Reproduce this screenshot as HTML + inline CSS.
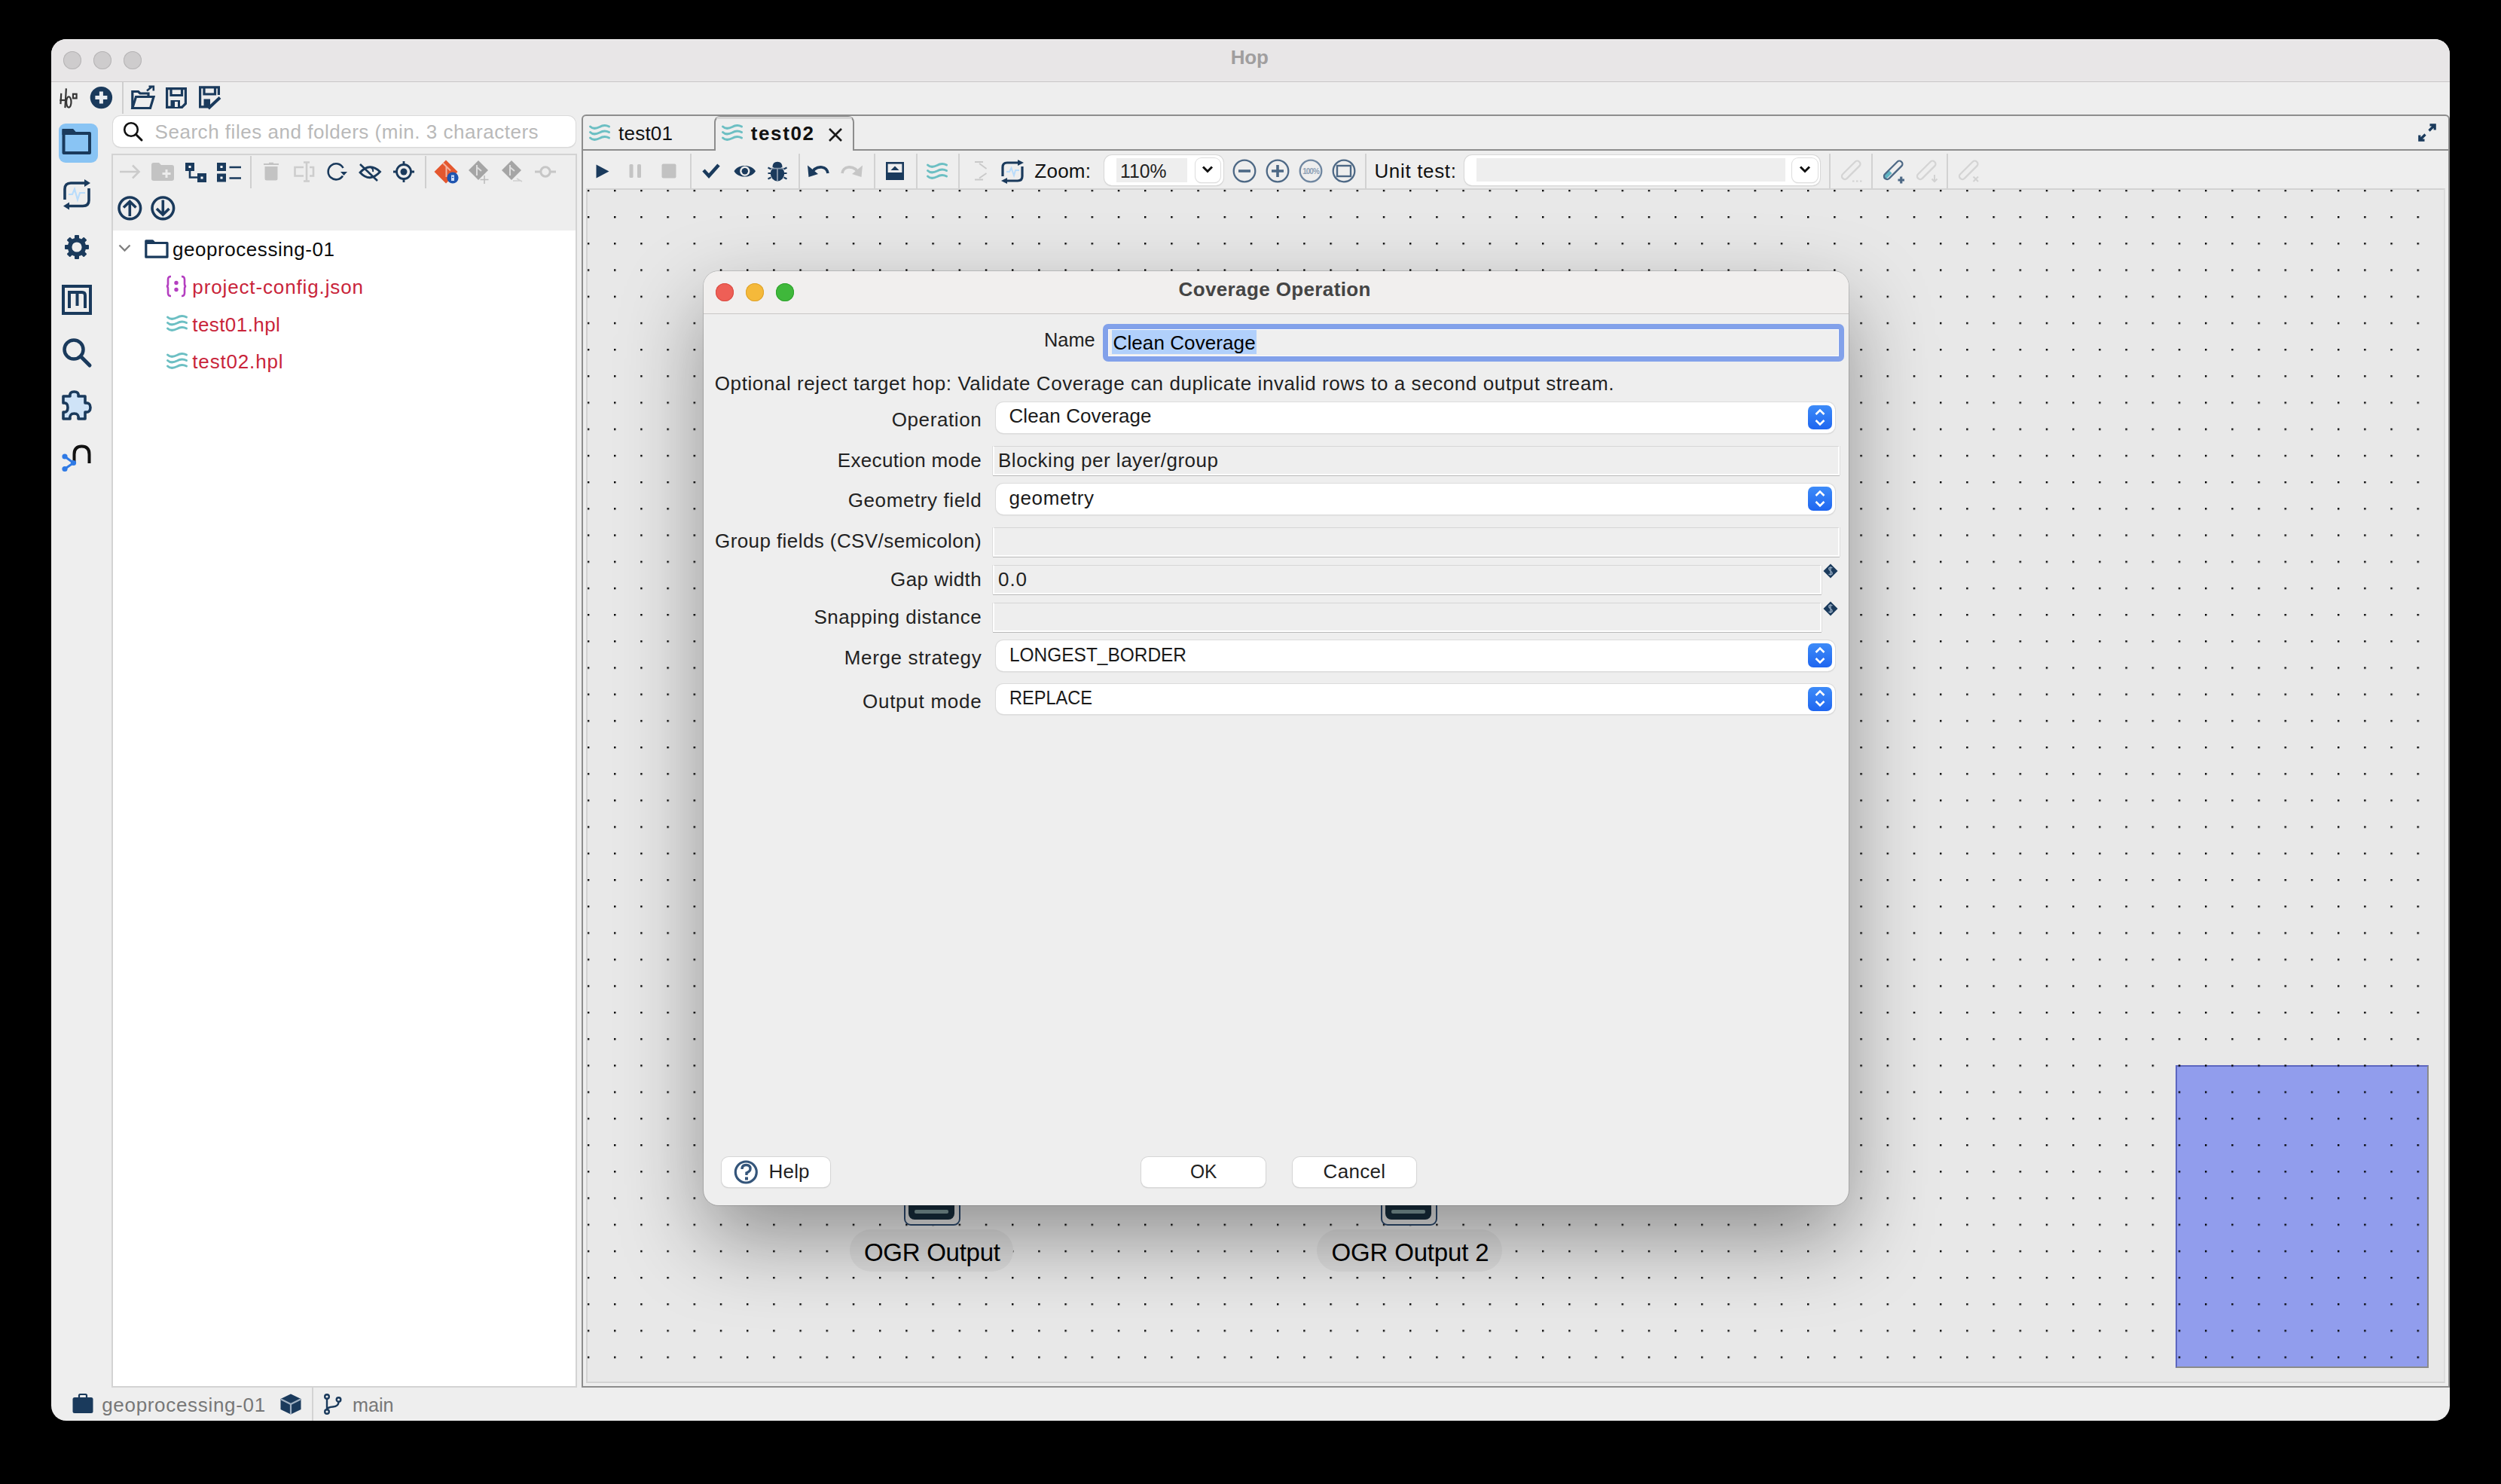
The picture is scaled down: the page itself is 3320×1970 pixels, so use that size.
<!DOCTYPE html>
<html><head><meta charset="utf-8">
<style>
*{box-sizing:border-box;margin:0;padding:0}
html,body{width:3320px;height:1970px;overflow:hidden;background:#000;font-family:"Liberation Sans",sans-serif}
.a{position:absolute}
.t{position:absolute;white-space:nowrap;line-height:1}
svg.a{overflow:visible}
</style></head>
<body>
<div class="a" style="left:68px;top:52px;width:3184px;height:1834px;border-radius:20px;background:#eeeeee;overflow:hidden"><div class="a" style="left:0;top:0;width:3184px;height:57px;background:#e8e6e7;border-bottom:1px solid #c9c7c8"></div><div class="a" style="left:0;top:0;width:3184px;height:1px;background:#f6f5f5"></div></div>
<div class="a" style="left:84px;top:68px;width:24px;height:24px;border-radius:50%;background:#cecccd;box-shadow:inset 0 0 0 1px #b6b4b5"></div>
<div class="a" style="left:124px;top:68px;width:24px;height:24px;border-radius:50%;background:#cecccd;box-shadow:inset 0 0 0 1px #b6b4b5"></div>
<div class="a" style="left:164px;top:68px;width:24px;height:24px;border-radius:50%;background:#cecccd;box-shadow:inset 0 0 0 1px #b6b4b5"></div>
<div class="t" style="left:1633.8px;top:63.1px;font-size:26px;color:#a09e9f;font-weight:700;letter-spacing:-0.273px;">Hop</div>
<svg class="a" style="left:78px;top:117px;" width="25" height="27" viewBox="0 0 25 27"><g fill="none" stroke="#222" stroke-width="2.2" stroke-linecap="square" opacity="0.9"><path d="M3.2 8 L2.5 20"/><path d="M2.5 16 H8.5"/><path d="M9.8 1.5 L8.5 25"/><ellipse cx="13.3" cy="18.5" rx="3.2" ry="7.2"/><rect x="19" y="7.8" width="4.6" height="5.6"/></g></svg>
<svg class="a" style="left:119px;top:114px;" width="31" height="31" viewBox="0 0 31 31"><circle cx="15.4" cy="15.6" r="14.7" fill="#1a3a5c"/><path d="M15.4 7.6 V23.6 M7.4 15.6 H23.4" stroke="#e9edf2" stroke-width="5"/></svg>
<div class="a" style="left:162px;top:109px;width:2px;height:42px;background:#cfcfcf"></div>
<svg class="a" style="left:174px;top:114px;" width="32" height="32" viewBox="0 0 32 32"><g fill="none" stroke="#1a3a5c" stroke-width="3.2" stroke-linejoin="miter"><path d="M1.8 29.5 V7.5 H9.5 L12 10 H23 V13"/><path d="M1.8 29.5 L6.5 14.5 H30 L25.5 29.5 Z"/></g><path d="M21 6.5 L28 0.8 M23.5 0.8 H29.8 V6.5" fill="none" stroke="#1a3a5c" stroke-width="2.6"/></svg>
<svg class="a" style="left:220px;top:116px;" width="29" height="28" viewBox="0 0 29 28"><g fill="none" stroke="#1a3a5c" stroke-width="3.2"><path d="M1.6 1.6 H26.4 V21.5 L21.5 26.4 H1.6 Z"/><path d="M7 1.6 V10.5 H21.5 V1.6"/></g><path d="M6.5 17 H19 V26.4 H6.5 Z" fill="#1a3a5c"/><rect x="12" y="19" width="4" height="7" fill="#eeeeee"/></svg>
<svg class="a" style="left:264px;top:114px;" width="30" height="32" viewBox="0 0 30 32"><g fill="none" stroke="#1a3a5c" stroke-width="3.2"><path d="M12 27.8 H1.6 V1.8 H26.4 V12"/><path d="M7 1.8 V11 H21.5 V1.8"/></g><path d="M6.5 17.5 H15 V27.8 H6.5 Z" fill="#1a3a5c"/><path d="M12.5 30 L28 15.5" stroke="#1a3a5c" stroke-width="4"/></svg>
<div class="a" style="left:78px;top:164px;width:52px;height:52px;background:#89c4f4;border-radius:9px"></div>
<svg class="a" style="left:82px;top:170px;" width="40" height="36" viewBox="0 0 40 36"><path d="M2.5 3 H14 L17.5 7 H37 V33 H2.5 Z" fill="#89c4f4" stroke="#1a3a5c" stroke-width="4" stroke-linejoin="round"/><path d="M2.5 3 H14 L17.5 7 H2.5Z" fill="#1a3a5c" stroke="#1a3a5c" stroke-width="4"/></svg>
<svg class="a" style="left:84px;top:238px;" width="36" height="40" viewBox="0 0 36 40"><g fill="none" stroke="#1a3a5c" stroke-width="3.6"><path d="M2 27 V13 Q2 5 10 5 H30"/><path d="M34 12 V28 Q34 35.5 26 35.5 H6"/></g><path d="M28 0 L36 5 L28 10Z M8 30.5 L0 35.5 L8 40.5Z" fill="#1a3a5c"/><path d="M7 20 H12 L15 13 L19 27 L22 18 H29" fill="none" stroke="#b9dcfb" stroke-width="2.2"/></svg>
<svg class="a" style="left:86px;top:312px;" width="32" height="32" viewBox="0 0 32 32"><rect x="13" y="0" width="6" height="8" rx="1" fill="#1a3a5c" transform="rotate(0 16 16)"/><rect x="13" y="0" width="6" height="8" rx="1" fill="#1a3a5c" transform="rotate(45 16 16)"/><rect x="13" y="0" width="6" height="8" rx="1" fill="#1a3a5c" transform="rotate(90 16 16)"/><rect x="13" y="0" width="6" height="8" rx="1" fill="#1a3a5c" transform="rotate(135 16 16)"/><rect x="13" y="0" width="6" height="8" rx="1" fill="#1a3a5c" transform="rotate(180 16 16)"/><rect x="13" y="0" width="6" height="8" rx="1" fill="#1a3a5c" transform="rotate(225 16 16)"/><rect x="13" y="0" width="6" height="8" rx="1" fill="#1a3a5c" transform="rotate(270 16 16)"/><rect x="13" y="0" width="6" height="8" rx="1" fill="#1a3a5c" transform="rotate(315 16 16)"/><circle cx="16" cy="16" r="9.4" fill="none" stroke="#1a3a5c" stroke-width="5.6"/></svg>
<svg class="a" style="left:82px;top:378px;" width="40" height="40" viewBox="0 0 40 40"><rect x="2" y="2" width="36" height="36" fill="none" stroke="#1a3a5c" stroke-width="4"/><path d="M10 31 V10 H27 Q31 10 31 14 V31 M20.5 10 V28" fill="none" stroke="#1a3a5c" stroke-width="4"/></svg>
<svg class="a" style="left:82px;top:448px;" width="40" height="40" viewBox="0 0 40 40"><circle cx="16" cy="16" r="12.5" fill="none" stroke="#1a3a5c" stroke-width="4.5"/><path d="M25 25 L37 37" stroke="#1a3a5c" stroke-width="5" stroke-linecap="round"/></svg>
<svg class="a" style="left:82px;top:518px;" width="40" height="40" viewBox="0 0 40 40"><path d="M2 8 H11 Q10 2 16.5 2 Q23 2 22 8 H31 V17 Q38 16 38 23 Q38 30 31 29 V38 H22 Q23 31 16.5 31 Q10 31 11 38 H2 V29 Q8 30 8 23 Q8 16 2 17 Z" fill="#cfe3f7" stroke="#1a3a5c" stroke-width="3.6" stroke-linejoin="round"/></svg>
<svg class="a" style="left:82px;top:589px;" width="40" height="38" viewBox="0 0 40 38"><path d="M16.5 26 V14 Q16.5 3.5 26.5 3.5 Q36.5 3.5 36.5 14 V26" fill="none" stroke="#111" stroke-width="4"/><path d="M4 17 L15.5 25.5 L4 33.5" fill="none" stroke="#2f7ae5" stroke-width="3"/><circle cx="4" cy="17" r="3.6" fill="#2f7ae5"/><circle cx="15.5" cy="25.5" r="3.6" fill="#2f7ae5"/><circle cx="4" cy="33.5" r="3.6" fill="#2f7ae5"/></svg>
<div class="a" style="left:150px;top:154px;width:614px;height:41px;background:#fff;border-radius:10px;box-shadow:0 0 0 1px #dadada,0 1px 1.5px #bdbdbd"></div>
<svg class="a" style="left:163px;top:161px;" width="28" height="28" viewBox="0 0 28 28"><circle cx="11" cy="11" r="8.8" fill="none" stroke="#111" stroke-width="2.6"/><path d="M17.5 17.5 L25 25" stroke="#111" stroke-width="3" stroke-linecap="round"/></svg>
<div class="t" style="left:205.6px;top:162.4px;font-size:26px;color:#b9b9b9;font-weight:400;letter-spacing:0.524px;">Search files and folders (min. 3 characters</div>
<div class="a" style="left:148px;top:204px;width:618px;height:1638px;background:#eeeeee;border:2px solid #d3d3d3"></div>
<div class="a" style="left:150px;top:306px;width:614px;height:1534px;background:#ffffff"></div>
<svg class="a" style="left:158px;top:218px;" width="28" height="20" viewBox="0 0 28 20"><path d="M1 10 H26 M18 1.5 L26.5 10 L18 18.5" fill="none" stroke="#cbcbcb" stroke-width="2.6"/></svg>
<svg class="a" style="left:201px;top:216px;" width="30" height="24" viewBox="0 0 30 24"><path d="M0 3 Q0 0 3 0 H10 L13 3 H27 Q30 3 30 6 V21 Q30 24 27 24 H3 Q0 24 0 21Z" fill="#c3c3c3"/><path d="M20 9 V20 M14.5 14.5 H25.5" stroke="#ececec" stroke-width="3"/></svg>
<svg class="a" style="left:246px;top:216px;" width="28" height="26" viewBox="0 0 28 26"><rect x="0" y="0" width="12" height="11" fill="#1a3a5c"/><rect x="16" y="14" width="12" height="12" fill="#1a3a5c"/><rect x="4.5" y="4" width="3" height="3" fill="#fff"/><rect x="20.5" y="18.5" width="3" height="3" fill="#fff"/><path d="M6 11 V19.5 H16" fill="none" stroke="#1a3a5c" stroke-width="2.6"/></svg>
<svg class="a" style="left:288px;top:216px;" width="32" height="26" viewBox="0 0 32 26"><rect x="0" y="0" width="12" height="11" fill="#1a3a5c"/><rect x="0" y="14.5" width="12" height="11" fill="#1a3a5c"/><rect x="4.5" y="4" width="3" height="3" fill="#fff"/><rect x="4.5" y="18.5" width="3" height="3" fill="#fff"/><path d="M16.5 6 H32 M16.5 20.5 H32" stroke="#1a3a5c" stroke-width="2.6"/></svg>
<div class="a" style="left:332px;top:207px;width:2px;height:43px;background:#cfcfcf"></div>
<svg class="a" style="left:350px;top:216px;" width="20" height="24" viewBox="0 0 20 24"><path d="M0 2 H20 M7 0.8 H13" stroke="#c3c3c3" stroke-width="2"/><path d="M1.5 5 H18.5 V21 Q18.5 23.5 16 23.5 H4 Q1.5 23.5 1.5 21Z" fill="#c3c3c3"/></svg>
<svg class="a" style="left:390px;top:214px;" width="28" height="28" viewBox="0 0 28 28"><path d="M13 8 H1.5 V19.5 H13 M21 8 H26 V19.5 H21 M17 2 V26 M13 1.5 H21 M13 26.5 H21" fill="none" stroke="#cdcdcd" stroke-width="2.6"/></svg>
<svg class="a" style="left:433px;top:216px;" width="28" height="24" viewBox="0 0 28 24"><path d="M22 17.5 A10.5 10.5 0 1 1 22.5 7" fill="none" stroke="#1a3a5c" stroke-width="2.6"/><path d="M19 12 H28 L23.5 17Z" fill="#1a3a5c"/></svg>
<svg class="a" style="left:476px;top:217px;" width="31" height="24" viewBox="0 0 31 24"><path d="M2 12 Q15 -2 28.5 11 Q15 26 2 12Z" fill="none" stroke="#1a3a5c" stroke-width="2.8"/><path d="M2 1 L25 23" stroke="#1a3a5c" stroke-width="2.6"/><path d="M16 5 Q20 7 19 11" fill="none" stroke="#1a3a5c" stroke-width="2"/></svg>
<svg class="a" style="left:522px;top:214px;" width="28" height="28" viewBox="0 0 28 28"><circle cx="14" cy="14" r="9.5" fill="none" stroke="#1a3a5c" stroke-width="2.8"/><circle cx="14" cy="14" r="4.5" fill="#1a3a5c"/><path d="M14 0 V5 M14 23 V28 M0 14 H5 M23 14 H28" stroke="#1a3a5c" stroke-width="2.8"/></svg>
<div class="a" style="left:564px;top:207px;width:2px;height:43px;background:#cfcfcf"></div>
<svg class="a" style="left:576px;top:212px;" width="33" height="33" viewBox="0 0 33 33"><path d="M16 0.5 L31.5 16 L16 31.5 L0.5 16Z" fill="#e4572e"/><path d="M12 4.5 L16.5 9 V23 M16.5 9 L22 14.5" stroke="#f4b3a0" stroke-width="2" fill="none"/><circle cx="25" cy="24" r="7.6" fill="#1f55b0"/><rect x="23" y="20.5" width="4" height="7.5" fill="#cfe0fb"/><rect x="23.8" y="22.8" width="2.4" height="1.2" fill="#1f55b0"/></svg>
<svg class="a" style="left:620px;top:212px;" width="32" height="33" viewBox="0 0 32 33"><path d="M15 1 L28 14 L15 27 L2 14Z" fill="#a5a5a5"/><path d="M13 7 V21 M13 10 L19 15" stroke="#ddd" stroke-width="2" fill="none"/><path d="M23 21 V32 M17.5 26.5 H28.5" stroke="#bdbdbd" stroke-width="1.6"/></svg>
<svg class="a" style="left:664px;top:212px;" width="31" height="33" viewBox="0 0 31 33"><path d="M15 1 L28 14 L15 27 L2 14Z" fill="#a5a5a5"/><path d="M13 7 V21 M13 10 L19 15" stroke="#ddd" stroke-width="2" fill="none"/><path d="M17 28 H26 M22 25 L29 29" stroke="#cfcfcf" stroke-width="1.6"/></svg>
<svg class="a" style="left:710px;top:219px;" width="28" height="18" viewBox="0 0 28 18"><circle cx="14" cy="9" r="6.2" fill="none" stroke="#c6c6c6" stroke-width="3"/><path d="M0 9 H7.5 M20.5 9 H28" stroke="#c6c6c6" stroke-width="3"/></svg>
<svg class="a" style="left:156px;top:260px;" width="33" height="33" viewBox="0 0 33 33"><circle cx="16.3" cy="16.3" r="14.3" fill="none" stroke="#1a3a5c" stroke-width="3.6"/><path d="M16.3 27 V8 M8 15.5 L16.3 7.5 L24.5 15.5" fill="none" stroke="#1a3a5c" stroke-width="3.6"/></svg>
<svg class="a" style="left:200px;top:260px;" width="33" height="33" viewBox="0 0 33 33"><circle cx="16.3" cy="16.3" r="14.3" fill="none" stroke="#1a3a5c" stroke-width="3.6"/><path d="M16.3 5.5 V24.5 M8 17 L16.3 25 L24.5 17" fill="none" stroke="#1a3a5c" stroke-width="3.6"/></svg>
<svg class="a" style="left:157px;top:324px;" width="17" height="11" viewBox="0 0 17 11"><path d="M1.5 1.5 L8.5 8.5 L15.5 1.5" fill="none" stroke="#808080" stroke-width="2.4"/></svg>
<svg class="a" style="left:192px;top:318px;" width="32" height="25" viewBox="0 0 32 25"><path d="M1.8 1.8 H10.5 L13 4.5 H30 V23.2 H1.8Z" fill="none" stroke="#1a3a5c" stroke-width="3.2" stroke-linejoin="round"/><path d="M1.8 4.5 H13" stroke="#1a3a5c" stroke-width="3"/></svg>
<div class="t" style="left:229.0px;top:318.0px;font-size:26px;color:#0b0b0b;font-weight:400;letter-spacing:0.553px;">geoprocessing-01</div>
<svg class="a" style="left:220px;top:365px;" width="28" height="30" viewBox="0 0 28 30"><g fill="none" stroke="#b43fc0" stroke-width="2.6"><path d="M7 2 Q3 2 3 6 V12 Q3 15 0.8 15 Q3 15 3 18 V24 Q3 28 7 28"/><path d="M21 2 Q25 2 25 6 V12 Q25 15 27.2 15 Q25 15 25 18 V24 Q25 28 21 28"/></g><circle cx="14" cy="10.5" r="2.7" fill="#b43fc0"/><circle cx="14" cy="19.5" r="2.7" fill="#b43fc0"/></svg>
<div class="t" style="left:255.3px;top:367.6px;font-size:26px;color:#c9243a;font-weight:400;letter-spacing:0.872px;">project-config.json</div>
<svg class="a" style="left:220.5px;top:416.5px;" width="28" height="24" viewBox="0 0 28 24"><g fill="none" stroke="#6cbfc3" stroke-width="3" stroke-linecap="round"><path d="M1.5 4.0 C5 7.5, 9 7.0, 14 4.5 C18 2.0, 22 1.5, 26.5 4.0"/><path d="M1.5 11.5 C5 15.0, 9 14.5, 14 12.0 C18 9.5, 22 9.0, 26.5 11.5"/><path d="M1.5 19.0 C5 22.5, 9 22.0, 14 19.5 C18 17.0, 22 16.5, 26.5 19.0"/></g></svg>
<div class="t" style="left:255.3px;top:417.5px;font-size:26px;color:#c9243a;font-weight:400;letter-spacing:0.417px;">test01.hpl</div>
<svg class="a" style="left:220.5px;top:466.5px;" width="28" height="24" viewBox="0 0 28 24"><g fill="none" stroke="#6cbfc3" stroke-width="3" stroke-linecap="round"><path d="M1.5 4.0 C5 7.5, 9 7.0, 14 4.5 C18 2.0, 22 1.5, 26.5 4.0"/><path d="M1.5 11.5 C5 15.0, 9 14.5, 14 12.0 C18 9.5, 22 9.0, 26.5 11.5"/><path d="M1.5 19.0 C5 22.5, 9 22.0, 14 19.5 C18 17.0, 22 16.5, 26.5 19.0"/></g></svg>
<div class="t" style="left:255.3px;top:467.4px;font-size:26px;color:#c9243a;font-weight:400;letter-spacing:0.828px;">test02.hpl</div>
<div class="a" style="left:772px;top:152px;width:2480px;height:1690px;background:#eeeeee;border:2px solid #8d8d8d;border-radius:6px 6px 0 0"></div>
<div class="a" style="left:774px;top:198px;width:175px;height:2px;background:#8d8d8d"></div>
<div class="a" style="left:1132px;top:198px;width:2118px;height:2px;background:#8d8d8d"></div>
<div class="a" style="left:948px;top:154px;width:186px;height:46px;border:2px solid #8d8d8d;border-bottom:none;border-radius:8px 8px 0 0;background:#eeeeee"></div>
<div class="a" style="left:951px;top:155px;width:180px;height:3px;background:#d5d5d5;border-radius:6px 6px 0 0"></div>
<svg class="a" style="left:782px;top:163.5px;" width="28" height="24" viewBox="0 0 28 24"><g fill="none" stroke="#6cbfc3" stroke-width="3" stroke-linecap="round"><path d="M1.5 4.0 C5 7.5, 9 7.0, 14 4.5 C18 2.0, 22 1.5, 26.5 4.0"/><path d="M1.5 11.5 C5 15.0, 9 14.5, 14 12.0 C18 9.5, 22 9.0, 26.5 11.5"/><path d="M1.5 19.0 C5 22.5, 9 22.0, 14 19.5 C18 17.0, 22 16.5, 26.5 19.0"/></g></svg>
<div class="t" style="left:821.0px;top:164.0px;font-size:26px;color:#111;font-weight:400;letter-spacing:0.234px;">test01</div>
<svg class="a" style="left:958.3px;top:163.5px;" width="28" height="24" viewBox="0 0 28 24"><g fill="none" stroke="#6cbfc3" stroke-width="3" stroke-linecap="round"><path d="M1.5 4.0 C5 7.5, 9 7.0, 14 4.5 C18 2.0, 22 1.5, 26.5 4.0"/><path d="M1.5 11.5 C5 15.0, 9 14.5, 14 12.0 C18 9.5, 22 9.0, 26.5 11.5"/><path d="M1.5 19.0 C5 22.5, 9 22.0, 14 19.5 C18 17.0, 22 16.5, 26.5 19.0"/></g></svg>
<div class="t" style="left:996.7px;top:164.0px;font-size:26px;color:#111;font-weight:700;letter-spacing:1.629px;">test02</div>
<svg class="a" style="left:1099px;top:169px;" width="20" height="20" viewBox="0 0 20 20"><path d="M2 2 L18 18 M18 2 L2 18" stroke="#1a1a1a" stroke-width="2.6"/></svg>
<svg class="a" style="left:3210px;top:164px;" width="24" height="24" viewBox="0 0 24 24"><path d="M14.5 9.5 L22 2 M15.5 1.8 H22.2 V8.5 M9.5 14.5 L2 22 M1.8 15.5 V22.2 H8.5" fill="none" stroke="#1a3a5c" stroke-width="3.2"/></svg>
<svg class="a" style="left:791px;top:218px;" width="18" height="19" viewBox="0 0 18 19"><path d="M0.5 0.5 L17.5 9.5 L0.5 18.5Z" fill="#1a3a5c"/></svg>
<svg class="a" style="left:835px;top:217px;" width="17" height="20" viewBox="0 0 17 20"><rect x="0.5" y="1" width="5" height="18" rx="1.5" fill="#c4c4c4"/><rect x="11" y="1" width="5" height="18" rx="1.5" fill="#c4c4c4"/></svg>
<svg class="a" style="left:878px;top:217px;" width="20" height="20" viewBox="0 0 20 20"><rect x="0.5" y="0.5" width="19" height="19" rx="2" fill="#c2c2c2"/></svg>
<div class="a" style="left:916px;top:204px;width:2px;height:46px;background:#d2d2d2"></div>
<svg class="a" style="left:932px;top:217px;" width="24" height="20" viewBox="0 0 24 20"><path d="M2 9 L9 16.5 L22 2" fill="none" stroke="#1a3a5c" stroke-width="4.6"/></svg>
<svg class="a" style="left:973.5px;top:216.5px;" width="30" height="21" viewBox="0 0 30 21"><path d="M0.5 10.2 C6 0.5, 23 0.5, 29 10.2 C23 20, 6 20, 0.5 10.2Z" fill="#1a3a5c"/><circle cx="14.8" cy="10.2" r="6.6" fill="#eeeeee"/><circle cx="14.8" cy="10.2" r="4.2" fill="#1a3a5c"/></svg>
<svg class="a" style="left:1019px;top:214px;" width="26" height="27" viewBox="0 0 26 27"><path d="M6.5 8 Q6.5 0.8 13 0.8 Q19.5 0.8 19.5 8Z" fill="#1a3a5c"/><ellipse cx="13" cy="16.5" rx="9.2" ry="10" fill="#1a3a5c"/><path d="M4.5 9.6 H21.5 M13 9.6 V26" stroke="#8797aa" stroke-width="1.8"/><path d="M0.5 8.5 L4.5 10.5 M0.5 16 H4.5 M0.5 23.5 L4.5 21.5 M25.5 8.5 L21.5 10.5 M25.5 16 H21.5 M25.5 23.5 L21.5 21.5" stroke="#1a3a5c" stroke-width="2"/></svg>
<div class="a" style="left:1060px;top:204px;width:2px;height:46px;background:#d2d2d2"></div>
<svg class="a" style="left:1072px;top:218px;" width="28" height="20" viewBox="0 0 28 20"><path d="M4 14 Q9 3 19 4 Q26 5 27 12" fill="none" stroke="#1a3a5c" stroke-width="3.6"/><path d="M0 1.5 L1.5 17 L14 13Z" fill="#1a3a5c"/></svg>
<svg class="a" style="left:1117px;top:218px;" width="28" height="20" viewBox="0 0 28 20"><path d="M24 14 Q19 3 9 4 Q2 5 1 12" fill="none" stroke="#c6c6c6" stroke-width="3.6"/><path d="M28 1.5 L26.5 17 L14 13Z" fill="#c6c6c6"/></svg>
<div class="a" style="left:1160px;top:204px;width:2px;height:46px;background:#d2d2d2"></div>
<svg class="a" style="left:1176px;top:215px;" width="24" height="24" viewBox="0 0 24 24"><rect x="1.3" y="1.3" width="21.4" height="21.4" fill="none" stroke="#1a3a5c" stroke-width="2.6"/><rect x="1.3" y="14" width="21.4" height="8.7" fill="#1a3a5c"/><path d="M6.5 11 L12 5.5 L17.5 11Z" fill="#1a3a5c"/></svg>
<div class="a" style="left:1216px;top:204px;width:2px;height:46px;background:#d2d2d2"></div>
<svg class="a" style="left:1229.5px;top:214.5px;" width="28" height="24" viewBox="0 0 28 24"><g fill="none" stroke="#6cbfc3" stroke-width="3" stroke-linecap="round"><path d="M1.5 4.0 C5 7.5, 9 7.0, 14 4.5 C18 2.0, 22 1.5, 26.5 4.0"/><path d="M1.5 11.5 C5 15.0, 9 14.5, 14 12.0 C18 9.5, 22 9.0, 26.5 11.5"/><path d="M1.5 19.0 C5 22.5, 9 22.0, 14 19.5 C18 17.0, 22 16.5, 26.5 19.0"/></g></svg>
<div class="a" style="left:1272px;top:204px;width:2px;height:46px;background:#d2d2d2"></div>
<svg class="a" style="left:1293px;top:213px;" width="18" height="28" viewBox="0 0 18 28"><path d="M1 2 H12 M7 4 L16.5 11 M1 25.5 H12 M7 23.5 L16.5 17" fill="none" stroke="#c9c9c9" stroke-width="1.8"/></svg>
<svg class="a" style="left:1329px;top:212px;" width="30" height="31" viewBox="0 0 30 31"><g fill="none" stroke="#1a3a5c" stroke-width="3.2"><path d="M2 22 V10 Q2 4 8 4 H24"/><path d="M28 9 V22 Q28 28 22 28 H6"/></g><path d="M22 0 L30 4 L22 8Z M8 24 L0 28 L8 32Z" fill="#1a3a5c"/><path d="M7 16 H11 L13.5 11 L17 21 L19 14 H24" fill="none" stroke="#b9dcfb" stroke-width="2"/></svg>
<div class="t" style="left:1373.3px;top:214.0px;font-size:26px;color:#111;font-weight:400;letter-spacing:0.253px;">Zoom:</div>
<div class="a" style="left:1466px;top:206px;width:158px;height:40px;background:#fff;border-radius:10px;box-shadow:0 0 0 1px #d8d8d8,0 1px 1.5px #bdbdbd"></div>
<div class="a" style="left:1482px;top:210px;width:94px;height:32px;background:#eeeeee"></div>
<div class="t" style="left:1486.7px;top:214.0px;font-size:26px;color:#222;font-weight:400;transform:scaleX(0.9508);transform-origin:0 0;">110%</div>
<div class="a" style="left:1587px;top:210px;width:33px;height:32px;background:#fff;border-radius:8px;box-shadow:0 0 0 1px #dedede,0 1px 1.5px #c6c6c6"></div>
<svg class="a" style="left:1595px;top:219px;" width="16" height="12" viewBox="0 0 16 12"><path d="M2 2.5 L8 8.5 L14 2.5" fill="none" stroke="#111" stroke-width="3"/></svg>
<svg class="a" style="left:1636px;top:211px;" width="32" height="32" viewBox="0 0 32 32"><circle cx="16" cy="16" r="14.3" fill="none" stroke="#4d6885" stroke-width="2.3"/><path d="M8 16 H24" stroke="#4d6885" stroke-width="3.6"/></svg>
<svg class="a" style="left:1680px;top:211px;" width="32" height="32" viewBox="0 0 32 32"><circle cx="16" cy="16" r="14.3" fill="none" stroke="#4d6885" stroke-width="2.3"/><path d="M8 16 H24 M16 8 V24" stroke="#4d6885" stroke-width="3.6"/></svg>
<svg class="a" style="left:1724px;top:211px;" width="32" height="32" viewBox="0 0 32 32"><circle cx="16" cy="16" r="14.3" fill="none" stroke="#6f86a0" stroke-width="2.3"/><text x="16" y="20" font-size="10" font-family="Liberation Sans" font-weight="700" text-anchor="middle" fill="#8da0b5" letter-spacing="-1">100%</text></svg>
<svg class="a" style="left:1768px;top:211px;" width="32" height="32" viewBox="0 0 32 32"><circle cx="16" cy="16" r="14.3" fill="none" stroke="#4d6885" stroke-width="2.3"/><rect x="7" y="9" width="18" height="14" fill="none" stroke="#4d6885" stroke-width="2.4"/></svg>
<div class="a" style="left:1812px;top:204px;width:2px;height:46px;background:#d2d2d2"></div>
<div class="t" style="left:1824.4px;top:214.0px;font-size:26px;color:#111;font-weight:400;letter-spacing:0.667px;">Unit test:</div>
<div class="a" style="left:1944px;top:206px;width:472px;height:40px;background:#fff;border-radius:10px;box-shadow:0 0 0 1px #d8d8d8,0 1px 1.5px #bdbdbd"></div>
<div class="a" style="left:1960px;top:210px;width:410px;height:31px;background:#eeeeee"></div>
<div class="a" style="left:2379px;top:210px;width:34px;height:32px;background:#fff;border-radius:8px;box-shadow:0 0 0 1px #dedede,0 1px 1.5px #c6c6c6"></div>
<svg class="a" style="left:2388px;top:219px;" width="16" height="12" viewBox="0 0 16 12"><path d="M2 2.5 L8 8.5 L14 2.5" fill="none" stroke="#111" stroke-width="3"/></svg>
<div class="a" style="left:2428px;top:204px;width:2px;height:46px;background:#d2d2d2"></div>
<svg class="a" style="left:2442px;top:213px;" width="30" height="30" viewBox="0 0 30 30"><rect x="-4" y="-16.5" width="8" height="31" rx="3.8" transform="translate(14.5 13.5) rotate(45)" fill="none" stroke="#d4d4d4" stroke-width="2.3"/><path d="M17 27.5 H19.5 M22 27.5 H24.5 M27 27.5 H29.5" stroke="#d2d2d2" stroke-width="2"/></svg>
<div class="a" style="left:2484px;top:204px;width:2px;height:46px;background:#d2d2d2"></div>
<svg class="a" style="left:2498px;top:213px;" width="30" height="30" viewBox="0 0 30 30"><path d="M2.5 19 L9 12.5 L13.5 17 L7 23.5 Q4 26 2.5 24Z" fill="#5fb3c3" transform="translate(0 0)"/><rect x="-4" y="-16.5" width="8" height="31" rx="3.8" transform="translate(14.5 13.5) rotate(45)" fill="none" stroke="#4d6885" stroke-width="2.3"/><path d="M21.5 26 H30 M25.75 21.5 V30.5" stroke="#4d6885" stroke-width="3.2"/></svg>
<svg class="a" style="left:2542px;top:213px;" width="30" height="30" viewBox="0 0 30 30"><rect x="-4" y="-16.5" width="8" height="31" rx="3.8" transform="translate(14.5 13.5) rotate(45)" fill="none" stroke="#d4d4d4" stroke-width="2.3"/><path d="M26 19 V28 M22.5 24.5 L26 28 L29.5 24.5" fill="none" stroke="#d2d2d2" stroke-width="2"/></svg>
<div class="a" style="left:2584px;top:204px;width:2px;height:46px;background:#d2d2d2"></div>
<svg class="a" style="left:2598px;top:213px;" width="30" height="30" viewBox="0 0 30 30"><rect x="-4" y="-16.5" width="8" height="31" rx="3.8" transform="translate(14.5 13.5) rotate(45)" fill="none" stroke="#d4d4d4" stroke-width="2.3"/><path d="M21.5 21.5 L28 28 M28 21.5 L21.5 28" stroke="#d2d2d2" stroke-width="2"/></svg>
<div class="a" style="left:778px;top:250px;width:2468px;height:1586px;background:#e8e8e8;border:2px solid #d3d3d3;border-right-color:#dcdcdc;border-bottom-color:#d3d3d3"></div>
<div class="a" style="left:2888px;top:1414px;width:336px;height:402px;background:#919ded;border-left:2px solid #5c66c0;border-top:2px solid #5c66c0;border-right:2px solid #8a8a8a;border-bottom:2px solid #8a8a8a"></div>
<svg class="a" style="left:780px;top:252px" width="2463" height="1582"><defs><pattern id="dots" x="-0.2" y="-0.2" width="35.2" height="35.2" patternUnits="userSpaceOnUse"><rect x="0" y="0" width="2.4" height="2.4" fill="#000"/></pattern></defs><rect x="0" y="0" width="2463" height="1582" fill="url(#dots)"/></svg>
<div class="a" style="left:1200px;top:1560px;width:75px;height:67px;border:2px solid #2d4a6e;border-radius:9px;background:#e2e2e2"></div>
<div class="a" style="left:1206px;top:1560px;width:61px;height:59px;background:#172d3c;border-radius:8px"></div>
<div class="a" style="left:1214px;top:1606px;width:45px;height:5px;background:#7f9a9c;border-radius:2px"></div>
<div class="a" style="left:1833px;top:1560px;width:75px;height:67px;border:2px solid #2d4a6e;border-radius:9px;background:#e2e2e2"></div>
<div class="a" style="left:1839px;top:1560px;width:61px;height:59px;background:#172d3c;border-radius:8px"></div>
<div class="a" style="left:1847px;top:1606px;width:45px;height:5px;background:#7f9a9c;border-radius:2px"></div>
<div class="a" style="left:1128px;top:1632px;width:217px;height:56px;background:#dedede;border-radius:28px"></div>
<div class="t" style="left:1146.9px;top:1645.8px;font-size:33px;color:#000;font-weight:400;letter-spacing:-0.267px;">OGR Output</div>
<div class="a" style="left:1748px;top:1632px;width:246px;height:56px;background:#dedede;border-radius:28px"></div>
<div class="t" style="left:1767.5px;top:1645.8px;font-size:33px;color:#000;font-weight:400;letter-spacing:-0.176px;">OGR Output 2</div>
<svg class="a" style="left:96px;top:1850px;" width="28" height="26" viewBox="0 0 28 26"><path d="M9 5 V2.5 Q9 1 10.5 1 H17.5 Q19 1 19 2.5 V5" fill="none" stroke="#1a3a5c" stroke-width="2.2"/><rect x="0.5" y="5" width="27" height="21" rx="2.5" fill="#1a3a5c"/></svg>
<div class="t" style="left:135.2px;top:1852.0px;font-size:26px;color:#777777;font-weight:400;letter-spacing:0.686px;">geoprocessing-01</div>
<svg class="a" style="left:372px;top:1850px;" width="28" height="28" viewBox="0 0 28 28"><path d="M14 0.5 L27.5 7 V21 L14 27.5 L0.5 21 V7Z" fill="#1a3a5c"/><path d="M14 14 V27 M1 7.5 L14 14 L27 7.5" stroke="#9fb0c2" stroke-width="2.2" fill="none"/></svg>
<div class="a" style="left:414px;top:1842px;width:2px;height:44px;background:#d3d3d3"></div>
<svg class="a" style="left:430px;top:1850px;" width="24" height="28" viewBox="0 0 24 28"><g fill="none" stroke="#1a3a5c" stroke-width="2.4"><circle cx="4" cy="4" r="2.8"/><circle cx="4" cy="24" r="2.8"/><circle cx="19.5" cy="8" r="2.8"/><path d="M4 7 V21 M19.5 11 Q19.5 17 12 17.5 Q5 18 4 21"/></g></svg>
<div class="t" style="left:467.7px;top:1852.0px;font-size:26px;color:#777777;font-weight:400;transform:scaleX(0.9688);transform-origin:0 0;">main</div>
<div class="a" style="left:934px;top:360px;width:1520px;height:1240px;background:#eeeeee;border-radius:20px;box-shadow:0 0 0 1px rgba(0,0,0,0.14),0 44px 110px rgba(0,0,0,0.38);overflow:hidden"></div>
<div class="a" style="left:934px;top:360px;width:1520px;height:57px;background:#f1efee;border-bottom:1px solid #c9c7c6;border-radius:20px 20px 0 0"></div>
<div class="a" style="left:949.9px;top:376px;width:24px;height:24px;border-radius:50%;background:#ee5f56;box-shadow:inset 0 0 0 1px #d94b42"></div>
<div class="a" style="left:989.9px;top:376px;width:24px;height:24px;border-radius:50%;background:#f5b93a;box-shadow:inset 0 0 0 1px #dea22b"></div>
<div class="a" style="left:1029.9px;top:376px;width:24px;height:24px;border-radius:50%;background:#3fb83b;box-shadow:inset 0 0 0 1px #2fa22d"></div>
<div class="t" style="left:1564.5px;top:370.8px;font-size:26px;color:#444444;font-weight:700;letter-spacing:0.381px;">Coverage Operation</div>
<div class="t" style="left:1386.4px;top:438.0px;font-size:26px;color:#222222;font-weight:400;transform:scaleX(0.9746);transform-origin:0 0;">Name</div>
<div class="a" style="left:1464px;top:430px;width:984px;height:50px;border-radius:7px;background:#82a1ea"></div>
<div class="a" style="left:1471px;top:437px;width:970px;height:36px;background:#efefef;box-shadow:inset 0 0 0 1px #fdfdfd"></div>
<div class="a" style="left:1476px;top:438px;width:192px;height:32px;background:#b1d0fb"></div>
<div class="t" style="left:1477.6px;top:441.9px;font-size:26px;color:#000;font-weight:400;letter-spacing:0.085px;">Clean Coverage</div>
<div class="t" style="left:948.8px;top:496.0px;font-size:26px;color:#1f1f1f;font-weight:400;letter-spacing:0.578px;">Optional reject target hop: Validate Coverage can duplicate invalid rows to a second output stream.</div>
<div class="t" style="left:1183.7px;top:544.0px;font-size:26px;color:#222222;font-weight:400;letter-spacing:0.602px;">Operation</div>
<div class="a" style="left:1322px;top:533.5px;width:1114px;height:41.0px;background:#fff;border-radius:10px;box-shadow:0 0 0 1px #dcdcdc,0 1px 1.5px #b8b8b8"></div>
<div class="a" style="left:2400px;top:538.0px;width:32px;height:32px;border-radius:7px;background:linear-gradient(#3d8bf8,#1f66f0)"></div>
<svg class="a" style="left:2406px;top:538px;" width="20" height="32" viewBox="0 0 20 32"><path d="M4.5 12 L10 6.5 L15.5 12 M4.5 20 L10 25.5 L15.5 20" fill="none" stroke="#fff" stroke-width="2.6"/></svg>
<div class="t" style="left:1339.5px;top:539.4px;font-size:26px;color:#1a1a1a;font-weight:400;letter-spacing:0.085px;">Clean Coverage</div>
<div class="t" style="left:1111.7px;top:597.6px;font-size:26px;color:#222222;font-weight:400;letter-spacing:0.350px;">Execution mode</div>
<div class="a" style="left:1318px;top:591.5px;width:1124px;height:39.0px;background:#eeeeee;border-top:1px solid #d6d6d6;border-left:2px solid #fdfdfd;border-right:2px solid #fdfdfd;border-bottom:2px solid #fdfdfd;box-shadow:0 1px 0 #b9b9b9,-1px 0 0 #dddddd,1px 0 0 #dddddd"></div>
<div class="t" style="left:1325.0px;top:597.6px;font-size:26px;color:#1f1f1f;font-weight:400;letter-spacing:0.505px;">Blocking per layer/group</div>
<div class="t" style="left:1125.7px;top:651.0px;font-size:26px;color:#222222;font-weight:400;letter-spacing:0.609px;">Geometry field</div>
<div class="a" style="left:1322px;top:641.5px;width:1114px;height:41.0px;background:#fff;border-radius:10px;box-shadow:0 0 0 1px #dcdcdc,0 1px 1.5px #b8b8b8"></div>
<div class="a" style="left:2400px;top:646.0px;width:32px;height:32px;border-radius:7px;background:linear-gradient(#3d8bf8,#1f66f0)"></div>
<svg class="a" style="left:2406px;top:646px;" width="20" height="32" viewBox="0 0 20 32"><path d="M4.5 12 L10 6.5 L15.5 12 M4.5 20 L10 25.5 L15.5 20" fill="none" stroke="#fff" stroke-width="2.6"/></svg>
<div class="t" style="left:1339.5px;top:647.8px;font-size:26px;color:#1a1a1a;font-weight:400;letter-spacing:0.587px;">geometry</div>
<div class="t" style="left:949.0px;top:705.4px;font-size:26px;color:#222222;font-weight:400;letter-spacing:0.416px;">Group fields (CSV/semicolon)</div>
<div class="a" style="left:1318px;top:699.5px;width:1124px;height:39.0px;background:#eeeeee;border-top:1px solid #d6d6d6;border-left:2px solid #fdfdfd;border-right:2px solid #fdfdfd;border-bottom:2px solid #fdfdfd;box-shadow:0 1px 0 #b9b9b9,-1px 0 0 #dddddd,1px 0 0 #dddddd"></div>
<div class="t" style="left:1182.0px;top:756.0px;font-size:26px;color:#222222;font-weight:400;letter-spacing:0.453px;">Gap width</div>
<div class="a" style="left:1318px;top:749.5px;width:1100px;height:39.0px;background:#eeeeee;border-top:1px solid #d6d6d6;border-left:2px solid #fdfdfd;border-right:2px solid #fdfdfd;border-bottom:2px solid #fdfdfd;box-shadow:0 1px 0 #b9b9b9,-1px 0 0 #dddddd,1px 0 0 #dddddd"></div>
<div class="t" style="left:1325.0px;top:756.0px;font-size:26px;color:#1f1f1f;font-weight:400;letter-spacing:0.922px;">0.0</div>
<svg class="a" style="left:2420px;top:748px;" width="20" height="20" viewBox="0 0 20 20"><path d="M10 0.5 L19.5 10 L10 19.5 L0.5 10Z" fill="#1a3a5c"/><path d="M12.5 6 Q10 4.5 8 6 Q7 8 10 10 Q13 12 12 14 Q10 15.5 7.5 14 M10 4 V16" fill="none" stroke="#8ea4bb" stroke-width="1.4"/></svg>
<div class="t" style="left:1080.4px;top:805.5px;font-size:26px;color:#222222;font-weight:400;letter-spacing:0.522px;">Snapping distance</div>
<div class="a" style="left:1318px;top:799.5px;width:1100px;height:39.0px;background:#eeeeee;border-top:1px solid #d6d6d6;border-left:2px solid #fdfdfd;border-right:2px solid #fdfdfd;border-bottom:2px solid #fdfdfd;box-shadow:0 1px 0 #b9b9b9,-1px 0 0 #dddddd,1px 0 0 #dddddd"></div>
<svg class="a" style="left:2420px;top:798px;" width="20" height="20" viewBox="0 0 20 20"><path d="M10 0.5 L19.5 10 L10 19.5 L0.5 10Z" fill="#1a3a5c"/><path d="M12.5 6 Q10 4.5 8 6 Q7 8 10 10 Q13 12 12 14 Q10 15.5 7.5 14 M10 4 V16" fill="none" stroke="#8ea4bb" stroke-width="1.4"/></svg>
<div class="t" style="left:1120.7px;top:860.0px;font-size:26px;color:#222222;font-weight:400;letter-spacing:0.661px;">Merge strategy</div>
<div class="a" style="left:1322px;top:850px;width:1114px;height:40.5px;background:#fff;border-radius:10px;box-shadow:0 0 0 1px #dcdcdc,0 1px 1.5px #b8b8b8"></div>
<div class="a" style="left:2400px;top:854.2px;width:32px;height:32px;border-radius:7px;background:linear-gradient(#3d8bf8,#1f66f0)"></div>
<svg class="a" style="left:2406px;top:854px;" width="20" height="32" viewBox="0 0 20 32"><path d="M4.5 12 L10 6.5 L15.5 12 M4.5 20 L10 25.5 L15.5 20" fill="none" stroke="#fff" stroke-width="2.6"/></svg>
<div class="t" style="left:1339.5px;top:855.7px;font-size:26px;color:#1a1a1a;font-weight:400;transform:scaleX(0.9402);transform-origin:0 0;">LONGEST_BORDER</div>
<div class="t" style="left:1145.0px;top:917.5px;font-size:26px;color:#222222;font-weight:400;letter-spacing:0.739px;">Output mode</div>
<div class="a" style="left:1322px;top:907.5px;width:1114px;height:40.5px;background:#fff;border-radius:10px;box-shadow:0 0 0 1px #dcdcdc,0 1px 1.5px #b8b8b8"></div>
<div class="a" style="left:2400px;top:911.8px;width:32px;height:32px;border-radius:7px;background:linear-gradient(#3d8bf8,#1f66f0)"></div>
<svg class="a" style="left:2406px;top:911px;" width="20" height="32" viewBox="0 0 20 32"><path d="M4.5 12 L10 6.5 L15.5 12 M4.5 20 L10 25.5 L15.5 20" fill="none" stroke="#fff" stroke-width="2.6"/></svg>
<div class="t" style="left:1339.5px;top:913.0px;font-size:26px;color:#1a1a1a;font-weight:400;transform:scaleX(0.9062);transform-origin:0 0;">REPLACE</div>
<div class="a" style="left:958px;top:1536px;width:144px;height:40px;background:#fff;border-radius:9px;box-shadow:0 0 0 1px #d6d6d6,0 1px 1.5px #b5b5b5"></div>
<svg class="a" style="left:974px;top:1540px;" width="33" height="33" viewBox="0 0 33 33"><circle cx="16.3" cy="16" r="14" fill="none" stroke="#34557a" stroke-width="3.2"/><path d="M11 12 Q11 6.5 16.5 6.5 Q22 6.5 22 11.5 Q22 15 17 17 V20" fill="none" stroke="#34557a" stroke-width="3.4"/><rect x="15" y="22.5" width="4" height="4" fill="#34557a"/></svg>
<div class="t" style="left:1020.6px;top:1542.4px;font-size:26px;color:#1f1f1f;font-weight:400;letter-spacing:0.172px;">Help</div>
<div class="a" style="left:1515px;top:1536px;width:165px;height:40px;background:#fff;border-radius:9px;box-shadow:0 0 0 1px #d6d6d6,0 1px 1.5px #b5b5b5"></div>
<div class="t" style="left:1579.8px;top:1542.4px;font-size:26px;color:#1f1f1f;font-weight:400;transform:scaleX(0.9447);transform-origin:0 0;">OK</div>
<div class="a" style="left:1716px;top:1536px;width:164px;height:40px;background:#fff;border-radius:9px;box-shadow:0 0 0 1px #d6d6d6,0 1px 1.5px #b5b5b5"></div>
<div class="t" style="left:1756.6px;top:1542.4px;font-size:26px;color:#1f1f1f;font-weight:400;letter-spacing:0.293px;">Cancel</div>
</body></html>
